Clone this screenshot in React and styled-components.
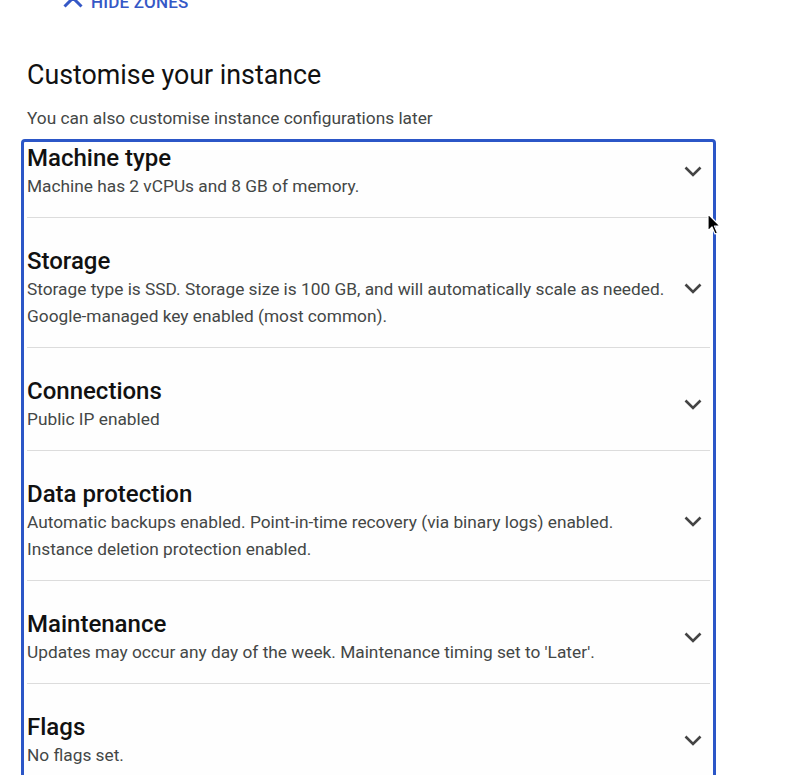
import React from "react";
import styled, { createGlobalStyle } from "styled-components";

const GlobalStyle = createGlobalStyle`
	html, body {
		margin: 0;
		padding: 0;
		background: #ffffff;
		overflow: hidden;
	}
	body {
		font-family: Roboto, "Noto Sans", Arial, sans-serif;
		-webkit-font-smoothing: antialiased;
	}
`;

const sections = [
	{ title: "Machine type", lines: ["Machine has 2 vCPUs and 8 GB of memory."] },
	{
		title: "Storage",
		lines: [
			"Storage type is SSD. Storage size is 100 GB, and will automatically scale as needed.",
			"Google-managed key enabled (most common).",
		],
	},
	{ title: "Connections", lines: ["Public IP enabled"] },
	{
		title: "Data protection",
		lines: [
			"Automatic backups enabled. Point-in-time recovery (via binary logs) enabled.",
			"Instance deletion protection enabled.",
		],
	},
	{
		title: "Maintenance",
		lines: ["Updates may occur any day of the week. Maintenance timing set to 'Later'."],
	},
	{ title: "Flags", lines: ["No flags set."] },
];

const ChevronDown = () => (
	<svg width="18" height="11" viewBox="0 0 18 11">
		<polyline points="1.5,1.5 9,9 16.5,1.5" fill="none" stroke="#444" strokeWidth="2.6" />
	</svg>
);

const ChevronUp = () => (
	<svg width="20" height="12" viewBox="0 0 20 12">
		<polyline points="1.5,10.5 10,2 18.5,10.5" fill="none" stroke="#3558c6" strokeWidth="3" />
	</svg>
);

const Cursor = () => (
	<svg width="16" height="24" viewBox="0 0 16 24">
		<path
			d="M1 1 L1 18 L5 14 L8 21 L10.5 20 L7.5 13 L13 13 Z"
			fill="#000"
			stroke="#fff"
			strokeWidth="1.2"
			strokeLinejoin="round"
		/>
	</svg>
);

const App = () => {
	return (
		<>
			<GlobalStyle />
			<Page>
				<HideZones>
					<ChevronUp />
					<span>Hide zones</span>
				</HideZones>
				<Heading>Customise your instance</Heading>
				<Lead>You can also customise instance configurations later</Lead>
				<Panel>
					{sections.map((s, i) => (
						<Section key={s.title} $first={i === 0}>
							<SectionText>
								<SectionTitle>{s.title}</SectionTitle>
								{s.lines.map((l) => (
									<SectionLine key={l}>{l}</SectionLine>
								))}
							</SectionText>
							<Toggle>
								<ChevronDown />
							</Toggle>
						</Section>
					))}
					<Pointer>
						<Cursor />
					</Pointer>
				</Panel>
			</Page>
		</>
	);
};

export default App;

const Page = styled.div`
	padding-left: 27px;
	display: flex;
	flex-direction: column;
	align-items: flex-start;
`;

const HideZones = styled.div`
	display: flex;
	align-items: center;
	gap: 8px;
	margin-top: -10px;
	margin-left: 36px;
	height: 24px;
	color: #3558c6;
	font-size: 17px;
	font-weight: 500;
	letter-spacing: 0.2px;
	text-transform: uppercase;
`;

const Heading = styled.h1`
	margin: 43px 0 0;
	font-size: 26.8px;
	line-height: 36px;
	font-weight: 400;
	color: #111111;
`;

const Lead = styled.p`
	margin: 12px 0 0;
	font-size: 17.3px;
	line-height: 26px;
	color: #444746;
`;

const Panel = styled.div`
	position: relative;
	box-sizing: border-box;
	margin: 8px 0 0 -6px;
	width: 695px;
	border: 3px solid #2b56c7;
	border-radius: 4px;
	padding: 0 3px;
	background: #fefefe;
`;

const Section = styled.div`
	display: flex;
	align-items: center;
	padding: ${(p) => (p.$first ? "1px" : "28px")} 0 17px;
	border-top: ${(p) => (p.$first ? "none" : "1px solid #dcdcdc")};
`;

const SectionText = styled.div`
	flex: 1;
	display: flex;
	flex-direction: column;
`;

const SectionTitle = styled.div`
	font-size: 24px;
	line-height: 30px;
	font-weight: 500;
	color: #111111;
`;

const SectionLine = styled.div`
	font-size: 17.3px;
	line-height: 27px;
	color: #444746;
`;

const Toggle = styled.div`
	display: flex;
	align-items: center;
	justify-content: center;
	width: 18px;
	margin-right: 8px;
`;

const Pointer = styled.div`
	position: absolute;
	left: 683px;
	top: 71px;
	line-height: 0;
`;
